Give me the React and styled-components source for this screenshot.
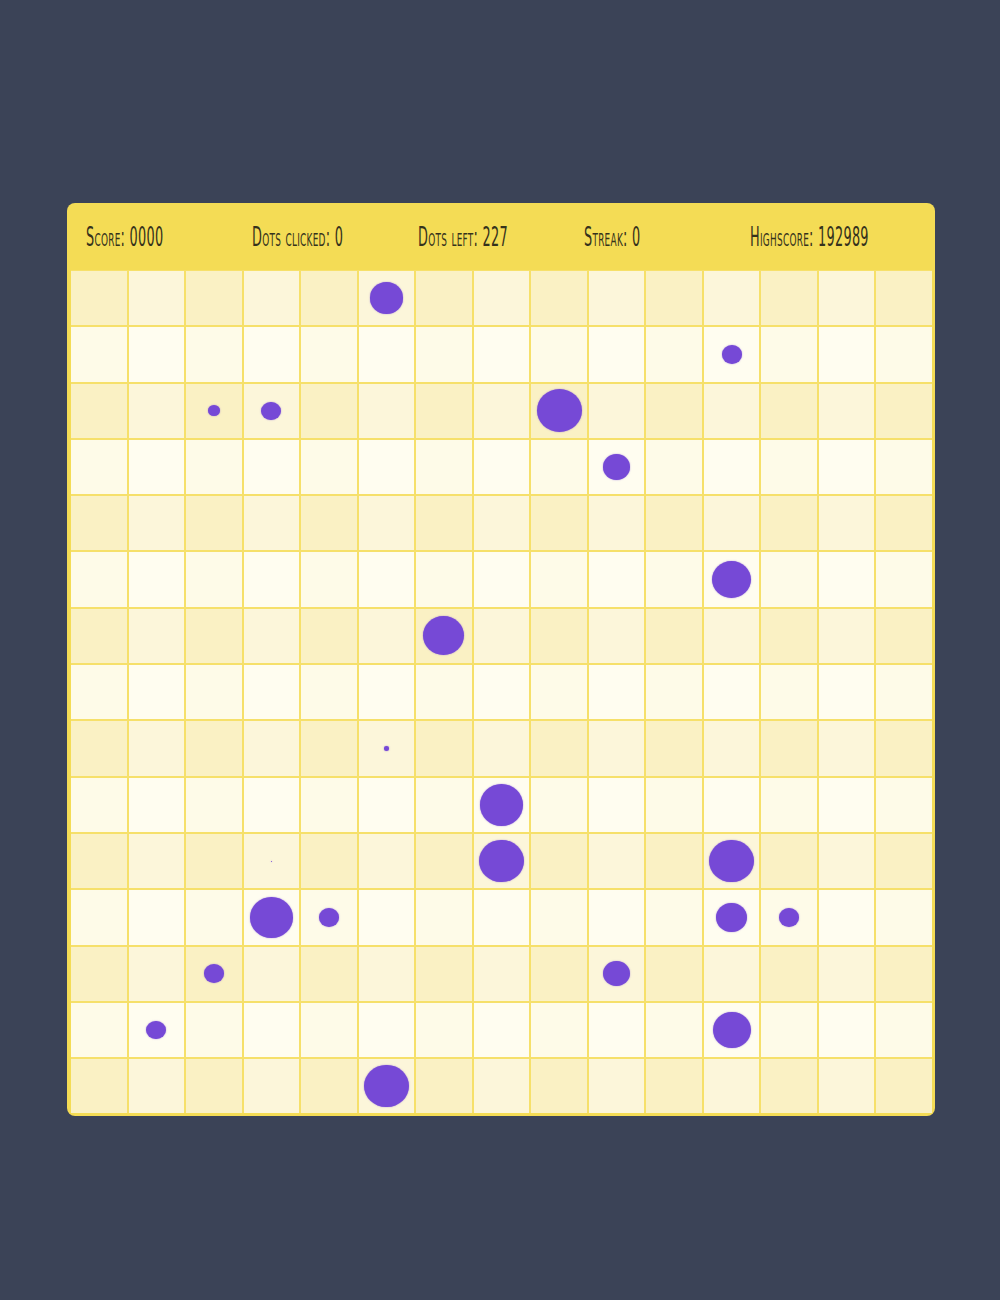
import React from "react";
import styled, { createGlobalStyle } from "styled-components";

const GlobalStyle = createGlobalStyle`
  html, body {
    margin: 0;
    padding: 0;
    background-color: #3b4357;
  }
`;

const Page = styled.div`
  min-height: 1300px;
  padding: 203px 0 0 2px;
  box-sizing: border-box;
  display: flex;
  justify-content: center;
  align-items: flex-start;
`;

const Board = styled.div`
  width: 868px;
  background-color: #f4dc55;
  border-radius: 8px;
  padding: 0 3px 3px 4px;
  box-sizing: border-box;
`;

const Header = styled.div`
  height: 67px;
  display: grid;
  grid-template-columns: repeat(5, 166px);
  align-items: center;
  padding: 0 0 0 15px;
  box-sizing: border-box;
`;

const Stat = styled.span`
  display: inline-block;
  font-family: "DejaVu Sans Condensed", "DejaVu Sans", sans-serif;
  font-stretch: condensed;
  font-variant: small-caps;
  font-size: 26px;
  color: #35321c;
  white-space: nowrap;
  transform: scaleX(0.55);
  transform-origin: left center;
  letter-spacing: 0.5px;
`;

const Grid = styled.div`
  display: grid;
  grid-template-columns: repeat(15, 1fr);
  grid-auto-rows: 54.3px;
  gap: 2px;
  padding-top: 1px;
  background-color: #f6e06a;
`;

const cellColors = [
  ["#faf1c4", "#fcf6da"],
  ["#fefbe8", "#fffdf0"],
];

const Cell = styled.div`
  display: flex;
  align-items: center;
  justify-content: center;
  background-color: ${props => cellColors[props.row % 2][props.col % 2]};
`;

const Dot = styled.div`
  width: ${props => props.size}%;
  height: ${props => props.size - 2}%;
  border-radius: 50%;
  background-color: #7649d6;
  box-shadow: 0 0 1.5px rgba(118, 73, 214, 0.7);
`;

const dots = {
  "0-5": 60,
  "1-11": 36,
  "2-2": 22,
  "2-3": 36,
  "2-8": 81,
  "3-9": 50,
  "5-11": 71,
  "6-6": 74,
  "8-5": 10,
  "9-7": 79,
  "10-3": 3,
  "10-7": 80,
  "10-11": 80,
  "11-3": 77,
  "11-4": 36,
  "11-11": 56,
  "11-12": 37,
  "12-2": 36,
  "12-9": 48,
  "13-1": 36,
  "13-11": 68,
  "14-5": 80,
};

const stats = [
  "Score: 0000",
  "Dots clicked: 0",
  "Dots left: 227",
  "Streak: 0",
  "Highscore: 192989",
];

const App = () => {
  const rows = [];
  for (let r = 0; r < 15; r++) {
    for (let c = 0; c < 15; c++) {
      const size = dots[`${r}-${c}`];
      rows.push(
        <Cell key={`${r}-${c}`} row={r} col={c}>
          {size ? <Dot size={size} /> : null}
        </Cell>
      );
    }
  }

  return (
    <Page>
      <GlobalStyle />
      <Board>
        <Header>
          {stats.map(s => (
            <div key={s}>
              <Stat>{s}</Stat>
            </div>
          ))}
        </Header>
        <Grid>{rows}</Grid>
      </Board>
    </Page>
  );
};

export default App;
